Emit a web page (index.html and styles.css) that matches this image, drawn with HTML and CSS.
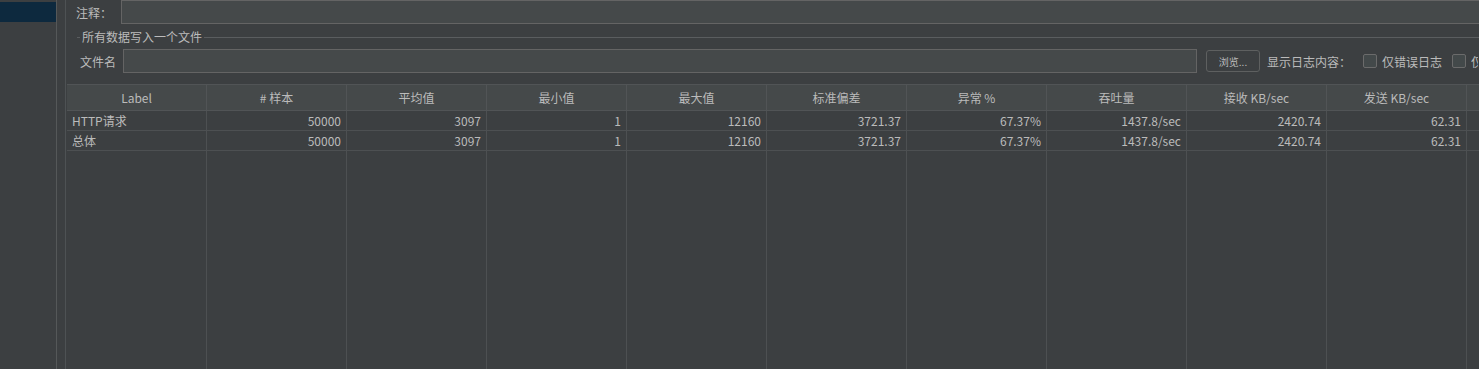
FILE: index.html
```html
<!DOCTYPE html>
<html lang="zh-CN">
<head>
    <meta charset="UTF-8">
    <title>聚合报告</title>
    <link rel="stylesheet" href="styles.css">
</head>
<body>
    <div class="app">
        <div class="sidebar">
            <div class="tree-item selected"></div>
        </div>
        <div class="spacer"></div>

        <div class="main">
            <div class="note-row">
                <span class="note-label">注释：</span>
                <div class="text-field note-field"></div>
            </div>

            <fieldset class="group">
                <legend>所有数据写入一个文件</legend>
                <div class="file-row">
                    <span class="file-label">文件名</span>
                    <div class="text-field file-field"></div>
                    <button class="browse-btn">浏览...</button>
                    <span class="log-label">显示日志内容：</span>
                    <span class="checkbox"></span>
                    <span class="check-text">仅错误日志</span>
                    <span class="checkbox"></span>
                    <span class="check-text last">仅</span>
                </div>
            </fieldset>

            <div class="grid">
                <div class="hcell">Label</div>
                <div class="hcell"># 样本</div>
                <div class="hcell">平均值</div>
                <div class="hcell">最小值</div>
                <div class="hcell">最大值</div>
                <div class="hcell">标准偏差</div>
                <div class="hcell">异常 %</div>
                <div class="hcell">吞吐量</div>
                <div class="hcell">接收 KB/sec</div>
                <div class="hcell">发送 KB/sec</div>
                <div class="hcell"></div>

                <div class="cell text">HTTP请求</div>
                <div class="cell">50000</div>
                <div class="cell">3097</div>
                <div class="cell">1</div>
                <div class="cell">12160</div>
                <div class="cell">3721.37</div>
                <div class="cell">67.37%</div>
                <div class="cell">1437.8/sec</div>
                <div class="cell">2420.74</div>
                <div class="cell">62.31</div>
                <div class="cell"></div>

                <div class="cell text">总体</div>
                <div class="cell">50000</div>
                <div class="cell">3097</div>
                <div class="cell">1</div>
                <div class="cell">12160</div>
                <div class="cell">3721.37</div>
                <div class="cell">67.37%</div>
                <div class="cell">1437.8/sec</div>
                <div class="cell">2420.74</div>
                <div class="cell">62.31</div>
                <div class="cell"></div>

                <div class="fill"></div>
                <div class="fill"></div>
                <div class="fill"></div>
                <div class="fill"></div>
                <div class="fill"></div>
                <div class="fill"></div>
                <div class="fill"></div>
                <div class="fill"></div>
                <div class="fill"></div>
                <div class="fill"></div>
                <div class="fill"></div>
            </div>
        </div>
    </div>
</body>
</html>
```

FILE: styles.css
```css
* {
    margin: 0;
    padding: 0;
    box-sizing: border-box;
}

body {
    background: #3c3f41;
    color: #bbbbbb;
    font-family: "Noto Sans CJK SC", "Noto Sans", sans-serif;
    font-size: 12px;
    height: 369px;
    overflow: hidden;
}

.app {
    display: flex;
    height: 369px;
}

/* arbre de gauche */
.sidebar {
    width: 57px;
    border-right: 1px solid #555859;
    padding-top: 2px;
}

.tree-item {
    height: 20px;
}

.tree-item.selected {
    background: #0d293e;
}

.spacer {
    width: 9px;
    border-right: 1px solid #4e5254;
}

.main {
    flex: 1;
    display: flex;
    flex-direction: column;
    overflow: hidden;
    min-width: 0;
}

.text-field {
    height: 24px;
    background: #45494a;
    border: 1px solid #646464;
}

.note-row {
    display: flex;
    align-items: center;
    height: 24px;
}

.note-label {
    width: 55px;
    padding-left: 10px;
    flex-shrink: 0;
}

.note-field {
    flex: 1;
    margin-right: -2px;
}

.group {
    margin: 5px 0 0 11px;
    border: none;
    border-top: 1px solid #5a5d5f;
    min-width: 0;
}

.group legend {
    margin-left: 3px;
    padding: 0 2px;
    line-height: 16px;
}

.file-row {
    display: flex;
    align-items: center;
    margin-top: 4px;
    padding-left: 3px;
    white-space: nowrap;
}

.file-row > * {
    flex-shrink: 0;
}

.file-label {
    width: 43px;
}

.file-field {
    width: 1074px;
}

.browse-btn {
    width: 54px;
    height: 22px;
    margin-left: 9px;
    background: #3c3f41;
    border: 1px solid #5e6060;
    border-radius: 3px;
    color: #bbbbbb;
    font-family: inherit;
    font-size: 10px;
}

.log-label {
    margin-left: 7px;
    width: 96px;
}

.checkbox {
    width: 14px;
    height: 14px;
    border: 1px solid #6b6b6b;
    border-radius: 2px;
    background: #43494a;
}

.check-text {
    margin-left: 5px;
    width: 70px;
}

.check-text.last {
    width: 7px;
    overflow: hidden;
}

/* tableau des resultats */
.grid {
    flex: 1;
    display: grid;
    grid-template-columns: repeat(10, 140px) 140px;
    grid-template-rows: 27px 20px 20px 1fr;
    margin-top: 11px;
    margin-left: 1px;
}

.hcell {
    background: #45494a;
    border-top: 1px solid #515456;
    border-bottom: 1px solid #515456;
    border-right: 1px solid #515456;
    text-align: center;
    line-height: 25px;
    white-space: nowrap;
    overflow: hidden;
}

.cell {
    border-bottom: 1px solid #4d5052;
    border-right: 1px solid #4d5052;
    text-align: right;
    padding-right: 5px;
    line-height: 19px;
    white-space: nowrap;
    overflow: hidden;
}

.cell.text {
    text-align: left;
    padding-left: 5px;
}

.fill {
    border-right: 1px solid #4d5052;
}
```
